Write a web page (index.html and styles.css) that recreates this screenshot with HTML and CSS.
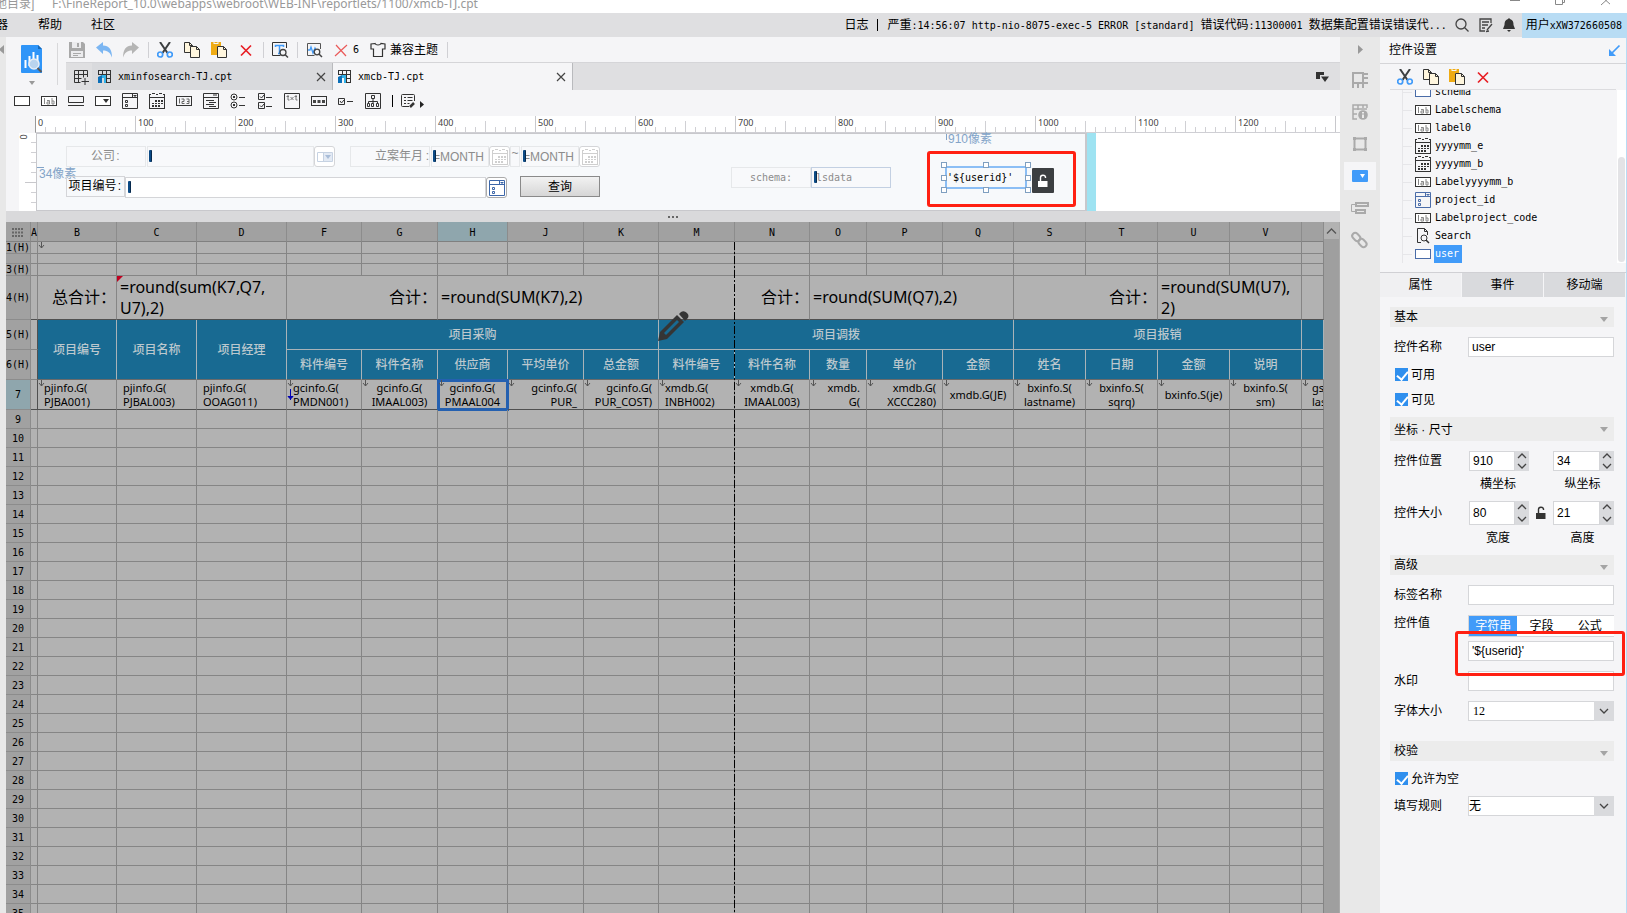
FILE: index.html
```html
<!DOCTYPE html>
<html lang="zh-CN">
<head>
<meta charset="utf-8">
<title>FineReport</title>
<link rel="stylesheet" href="styles.css">
</head>
<body>
<svg class="defs" aria-hidden="true">
  <symbol id="cut" viewBox="0 0 16 16"><path d="M3 0l7.500 11M13 0L5.500 11" stroke="#3c3f41" stroke-width="2" fill="none"/><circle cx="3.200" cy="12.500" r="2.500" fill="none" stroke="#419bf9" stroke-width="1.700"/><circle cx="12.800" cy="12.500" r="2.500" fill="none" stroke="#419bf9" stroke-width="1.700"/></symbol>
  <symbol id="copy" viewBox="0 0 16 16"><path d="M.5.5h5l3 3v7h-8z" fill="#fff6de" stroke="#333"/><path d="M5.500.5v3h3" fill="none" stroke="#333"/><path d="M6.500 4.500h6l3 3v8h-9z" fill="#fff6de" stroke="#333"/><path d="M12.500 4.500v3h3" fill="none" stroke="#333"/></symbol>
  <symbol id="paste" viewBox="0 0 16 16"><path d="M0 0h2.500v2h5V0H10v4H6v9H0z" fill="#efab13"/><path d="M3.500 0h3v1h-3z" fill="#efab13"/><path d="M6.500 4.500h6l3 3v8h-9z" fill="#fff6de" stroke="#333"/><path d="M12.500 4.500v3h3" fill="none" stroke="#333"/></symbol>
  <symbol id="del" viewBox="0 0 16 16"><path d="M3 3.500l10 10M13 3.500l-10 10" stroke="#e81e25" stroke-width="1.700"/></symbol>
  <symbol id="table" viewBox="0 0 16 16"><path d="M1 1.500h13M1.500 1v5M1.500 5.500h12M5.500 1v5M9.500 1v12M13.500 1v12.500M9 9.500h4.500M9 13.500h5" fill="none" stroke="#333"/><path d="M1 8l4-2v8H1z" fill="#0b6fb8"/><path d="M5 6h4v8H7V9H5z" fill="#31b2e8"/></symbol>
  <symbol id="w-text" viewBox="0 0 16 16"><rect x=".5" y="3.500" width="15" height="9" fill="#fff" stroke="currentColor"/></symbol>
  <symbol id="w-label" viewBox="0 0 16 16"><rect x=".5" y="3.500" width="15" height="9" fill="#fff" stroke="#333"/><path d="M3.500 5v6M6 7.500h2.500V11H6V9h2.500M11 5v6h2V8h-2" fill="none" stroke="#888"/></symbol>
  <symbol id="w-cal" viewBox="0 0 16 16"><path d="M0 1h1v15H0zM15 1h1v15h-1zM0 15h16v1H0zM0 1h2v1H0zM3 0h3v1H3zM7 1h2v1H7zM10 0h3v1h-3zM14 1h2v1h-2zM1 4h14v1H1zM6 7h2v2H6zM9 7h2v2H9zM12 7h2v2h-2zM3 10h2v1H3zM6 10h2v1H6zM9 10h2v1H9zM12 10h2v1h-2zM3 12h2v2H3zM6 12h2v2H6zM9 12h2v2H9z" fill="currentColor" shape-rendering="crispEdges"/></symbol>
  <symbol id="w-list" viewBox="0 0 16 16"><path d="M.5.5h15v15H.5zM.5 4.500h15M10.500.5v4M3.500 7.500h2v2h-2zM3.500 11.500h2v2h-2z" fill="none" stroke="currentColor"/><path d="M11 2h4l-2 2z" fill="currentColor"/></symbol>
  <symbol id="mark" viewBox="0 0 7 8"><path d="M3.500 0v6M1 3l2.500 3L6 3" fill="none" stroke="#555"/></symbol>
  <symbol id="unlock" viewBox="0 0 12 14"><path d="M1 7h9.500v6H1z" fill="currentColor"/><path d="M3.500 7V3.500c0-3 4.500-3 5-.5V4" fill="none" stroke="currentColor" stroke-width="1.400"/></symbol>
  <symbol id="chev" viewBox="0 0 10 6"><path d="M1 1l4 4 4-4" fill="none" stroke="#444" stroke-width="1.300"/></symbol>
</svg>

<header class="titlebar"><span>地目录]</span><span class="path">F:\FineReport_10.0\webapps\webroot\WEB-INF\reportlets/1100/xmcb-TJ.cpt</span>
  <svg class="winctl" width="100" height="6" viewBox="0 0 100 6" fill="none" stroke="#888"><path d="M0 .5h10M45.500 0v4.500h7V0M52.500 2.500h2V0M91 5l10-9M101 5L91-4"/></svg>
</header>
<nav class="menubar">
  <a href="#" class="m-cut">器</a><a href="#">帮助</a><a href="#">社区</a>
  <div class="status"><span>日志</span><i></i><span>严重<span class="mono">:14:56:07 http-nio-8075-exec-5 ERROR [standard] </span>错误代码<span class="mono">:11300001 </span>数据集配置错误错误代<span class="mono">...</span></span>
  <button aria-label="搜索"><svg width="14" height="14" fill="none" stroke="#444" stroke-width="1.300"><circle cx="6" cy="6" r="5"/><path d="M9.500 9.500l4 4"/></svg></button>
  <button aria-label="编辑"><svg width="14" height="14" fill="none" stroke="#444" stroke-width="1.300"><path d="M12 5V1H1v12h5M3 4h7M3 7h6M3 10h3M8 12l5-6M7 13.500l3-.5"/></svg></button>
  <button aria-label="通知"><svg width="12" height="14" fill="#333"><path d="M6 0l1 1c3 1 3.500 3 3.500 6l1.500 4H0l1.500-4C1.500 4 2 2 5 1zM4 12h4l-2 2z"/></svg></button></div>
  <span class="user">用户<span class="mono">xXW372660508</span></span>
</nav>

<div class="app">
  <aside class="edge"><svg width="5" height="9"><path d="M5 0v9L0 4.500z" fill="#999"/></svg></aside>
  <main>
    <section class="top">
      <button class="appicon" aria-label="预览"><svg width="22" height="29" viewBox="0 0 22 29"><path d="M1 0h16l4 4v24H1q-1 0-1-1V1q0-1 1-1z" fill="#2f95f8"/><path d="M17 0v4h4z" fill="#1769b8"/><path d="M4.500 15v8M8.500 11v10M12.500 7v8M16.500 10v6" stroke="#fff" stroke-width="2"/><circle cx="13" cy="19" r="5" fill="#b9d4ee" stroke="#e8eef5" stroke-width="1.500"/><path d="M16.500 23l4 4" stroke="#5a5a5a" stroke-width="2"/></svg><svg width="6" height="4"><path d="M0 0h6L3 4z" fill="#999"/></svg></button>
      <div class="topright">
        <div class="toolbar">
          <button aria-label="保存"><svg width="16" height="16"><path d="M0 0h14l2 2v14H0z" fill="#a9a9a9"/><path d="M3 0h9v6H3zM2 9h12v6H2z" fill="#ececee"/><path d="M8 1h2v4H8zM4 11h8v1H4zM4 13h5v1H4z" fill="#a9a9a9"/></svg></button>
          <button aria-label="撤销"><svg width="16" height="16"><path d="M0 5.500L7 0v3.500c6 0 9 4 9 12-2-5-4-7-9-7V12z" fill="#7cb6f2"/></svg></button>
          <button aria-label="重做"><svg width="16" height="16"><path d="M16 5.500L9 0v3.500c-6 0-9 4-9 12 2-5 4-7 9-7V12z" fill="#b5b5b5"/></svg></button>
          <i></i>
          <button aria-label="剪切"><svg width="16" height="16"><use href="#cut"/></svg></button>
          <button aria-label="复制"><svg width="16" height="16"><use href="#copy"/></svg></button>
          <button aria-label="粘贴"><svg width="16" height="16"><use href="#paste"/></svg></button>
          <button aria-label="删除"><svg width="16" height="16"><use href="#del"/></svg></button>
          <i></i>
          <button aria-label="查找"><svg width="16" height="16" fill="none"><path d="M14.500 6V.5H.5v13h8" stroke="#333"/><path d="M3.500 5V3.500h8V5M7.500 3.500v8M6 11.500h3" stroke="#419bf9" stroke-width="1.500"/><circle cx="11" cy="10.500" r="3" stroke="#444" stroke-width="1.300"/><path d="M13 12.500l3 3" stroke="#444" stroke-width="1.500"/></svg></button>
          <i></i>
          <button aria-label="监控"><svg width="16" height="16" fill="none"><path d="M14.500 7V1.500H1.500v12h7" stroke="#555"/><path d="M2 8h2l1-3 2 6 2-5 1 2" stroke="#419bf9" stroke-width="1.300"/><circle cx="11" cy="10" r="2.800" stroke="#444" stroke-width="1.300"/><path d="M13 12l3 3" stroke="#444" stroke-width="1.500"/></svg></button>
          <button><svg width="16" height="16" viewBox="0 0 16 16"><path d="M3 3l10 11M14 3L2 14" stroke="#ea5a5a" stroke-width="1.200"/></svg><span class="mono">6</span></button>
          <button><svg width="16" height="16" fill="none"><path d="M5 1.500L1 2v5h2.500v7.500h9V7H15V2l-4-.5c-1 2-5 2-6 0z" stroke="#333" stroke-width="1.200"/></svg><span>兼容主题</span></button>
          <i></i>
        </div>
        <div class="tabs">
          <button class="newtab" aria-label="新建"><svg width="16" height="16" fill="none" stroke="#333"><path d="M14.500 8V1.500H1.500v12h6M1.500 5.500h13M1.500 9.500h7M5.500 1.500v12M10.500 1.500v7M12 9v7M8.500 12.500H16"/></svg></button>
          <div class="tab"><svg width="16" height="16"><use href="#table"/></svg><span class="mono">xminfosearch-TJ.cpt</span><button aria-label="关闭"><svg width="8" height="8" stroke="#444" stroke-width="1.200"><path d="M0 0l8 8M8 0L0 8"/></svg></button></div>
          <div class="tab on"><svg width="16" height="16"><use href="#table"/></svg><span class="mono">xmcb-TJ.cpt</span><button aria-label="关闭"><svg width="8" height="8" stroke="#444" stroke-width="1.200"><path d="M0 0l8 8M8 0L0 8"/></svg></button></div>
          <button class="tablist" aria-label="标签列表"><svg width="13" height="10" fill="#333"><path d="M0 0h8v3H4v4H0zM5 4.500h8L9 10z"/></svg></button>
        </div>
      </div>
    </section>

    <div class="widgets">
      <button aria-label="文本"><svg width="16" height="16"><use href="#w-text"/></svg></button>
      <button aria-label="标签"><svg width="16" height="16"><use href="#w-label"/></svg></button>
      <button aria-label="按钮"><svg width="16" height="16"><path d="M.5 3.500h15v6H.5zM0 12.500h16" fill="none" stroke="#333"/></svg></button>
      <button aria-label="下拉"><svg width="16" height="16"><rect x=".5" y="3.500" width="15" height="9" fill="#fff" stroke="#333"/><path d="M8 6h6l-3 4z" fill="#333"/></svg></button>
      <button aria-label="列表"><svg width="16" height="16"><use href="#w-list"/></svg></button>
      <button aria-label="日期"><svg width="16" height="16"><use href="#w-cal"/></svg></button>
      <button aria-label="数字"><svg width="16" height="16" fill="none"><rect x=".5" y="3.500" width="15" height="9" stroke="#333"/><path d="M3.500 5.500v5M5.500 6h2.500v2.500H6v2h2.500M10.500 6H13v4.500h-2.500M11 8.500h2" stroke="#666"/></svg></button>
      <button aria-label="文本域"><svg width="16" height="16" fill="none" stroke="#333"><path d="M.5.5h15v15H.5zM.5 4.500h15M10 2h4M3 7.500h8M6 9.500h7M3 11.500h8M6 13.500h7"/></svg></button>
      <button aria-label="单选组"><svg width="16" height="16" fill="none" stroke="#333"><circle cx="4" cy="4" r="3"/><circle cx="4" cy="12" r="3"/><path d="M3 4h2M3 12h2" stroke-width="2"/><path d="M9 4.500h6M9 12.500h6"/></svg></button>
      <button aria-label="复选组"><svg width="16" height="16" fill="none" stroke="#333"><path d="M1.500.5h6v6h-6zM1.500 9.500h6v6h-6zM3 3.500l1.500 1.500L7 2M3 12.500l1.500 1.500L7 11M9 4.500h6M9 13.500h6"/></svg></button>
      <button aria-label="文本块"><svg width="16" height="16" fill="none" stroke="#333"><path d="M.5.5h15v15H.5z"/><path d="M4 2v5h1.500M2.500 3.500H5M6.500 4l3 3M9.500 4l-3 3M12 2v5h1.500M10.500 3.500H13" stroke="#777"/></svg></button>
      <button aria-label="密码"><svg width="16" height="16"><rect x=".5" y="3.500" width="15" height="9" fill="none" stroke="#333"/><path d="M2 7h3v3H2zM6.500 7h3v3h-3zM11 7h3v3h-3z" fill="#444"/></svg></button>
      <button aria-label="复选"><svg width="16" height="16" fill="none" stroke="#333"><path d="M.5 5.500h6v6h-6zM2 8l1.500 2L6 7M9 8.500h6"/></svg></button>
      <button aria-label="树"><svg width="16" height="16" fill="none" stroke="#333"><path d="M.5.5h15v15H.5zM6.500 2.500h3v3h-3zM2.500 10.500h2v3h-2zM6.500 10.500h2v3h-2zM11.500 10.500h2v3h-2zM8 5.500v5M3.500 10V8.500h9V10"/></svg></button>
      <i></i>
      <button aria-label="更多"><svg width="24" height="16" fill="none" stroke="#333"><path d="M13.500 8V2.500Q13.500 1.500 12.500 1.500h-11Q.5 1.500.5 2.500v10q0 1 1 1H8M3 4.500h2M3 7.500h2M3 10.500h2M6.500 4.500h5M6.500 7.500h5M6.500 10.500h2"/><path d="M9 14l4-4" stroke-width="2.500"/><path d="M19 8v7l4-3.500z" fill="#222" stroke="none"/></svg></button>
    </div>

    <div class="ruler"><span>0</span><span>100</span><span>200</span><span>300</span><span>400</span><span>500</span><span>600</span><span>700</span><span>800</span><span>900</span><span>1000</span><span>1100</span><span>1200</span><span></span></div>
    <section class="design">
      <div class="vruler"><span>0</span></div>
      <div class="canvas">
        <label class="w lab dim p-co" for="co">公司<b>:</b></label>
        <input class="w dim p-coin" id="co"><em class="caret p-c1"></em>
        <button class="w wb dim p-cob" aria-label="公司下拉"><svg width="16" height="16"><path d="M.5 3.500h15v9H.5zM6.500 3.500v9" fill="none" stroke="#c6d2e2"/><path d="M7 4h8v8H7z" fill="#e3eaf4"/><path d="M8 6h6l-3 4z" fill="#a9bdd8"/></svg></button>
        <label class="w lab dim right p-ym" for="m1">立案年月<b>:</b></label>
        <input class="w dim p-m1" id="m1" value="=MONTH"><em class="caret p-c2"></em>
        <button class="w wb dim p-m1b" aria-label="开始月"><svg width="16" height="16"><use href="#w-cal"/></svg></button>
        <span class="w lab dim p-tilde">~</span>
        <input class="w dim p-m2" aria-label="结束月" value="=MONTH"><em class="caret p-c3"></em>
        <button class="w wb dim p-m2b" aria-label="结束月选择"><svg width="16" height="16"><use href="#w-cal"/></svg></button>
        <span class="hint p-h1">34像素</span>
        <label class="w lab p-pj" for="pj">项目编号<b>:</b></label>
        <input class="w p-pjin" id="pj"><em class="caret p-c4"></em>
        <button class="w wb p-pjb" aria-label="项目选择"><svg width="16" height="16"><use href="#w-list"/></svg></button>
        <button class="query">查询</button>
        <label class="w lab dim mono p-sc" for="sc">schema:</label>
        <input class="w dim mono schema p-scin" id="sc" value="lsdata"><em class="caret p-c5"></em>
        <span class="hint p-h2">910像素</span>
        <div class="selected mono">'${userid}'<u></u><u></u><u></u><u></u><u></u><u></u><u></u><u></u></div>
        <button class="lock" aria-label="解锁"><svg width="12" height="14"><use href="#unlock"/></svg></button>
        <div class="redbox p-red"></div>
      </div>
      <div class="grow"></div>
    </section>
    <div class="splitter"><i></i><i></i><i></i></div>

    <section class="sheet">
      <div class="gridwrap">
        <table>
          <colgroup><col class="c25"><col class="c7"><col class="c79"><col class="c80"><col class="c90"><col class="c75"><col class="c76"><col class="c70"><col class="c76"><col class="c75"><col class="c76"><col class="c75"><col class="c57"><col class="c76"><col class="c71"><col class="c72"><col class="c72"><col class="c72"><col class="c72"><col></colgroup>
          <thead><tr class="h20"><th><svg width="12" height="9" fill="#666"><path d="M0 0h2v2H0zM3 0h2v2H3zM6 0h2v2H6zM9 0h2v2H9zM0 3.500h2v2H0zM3 3.500h2v2H3zM6 3.500h2v2H6zM9 3.500h2v2H9zM0 7h2v2H0zM3 7h2v2H3zM6 7h2v2H6zM9 7h2v2H9z"/></svg></th><th class="a">A</th><th>B</th><th>C</th><th>D</th><th>F</th><th>G</th><th class="cur">H</th><th>J</th><th>K</th><th>M</th><th>N</th><th>O</th><th>P</th><th>Q</th><th>S</th><th>T</th><th>U</th><th>V</th><th></th></tr></thead>
          <tbody id="rows">
            <tr class="h12"><th>1(H)</th><td></td><td><svg class="mk"><use href="#mark"/></svg></td><td></td><td></td><td></td><td></td><td></td><td></td><td></td><td></td><td></td><td></td><td></td><td></td><td></td><td></td><td></td><td></td><td></td></tr>
            <tr class="h10"><th></th><td></td><td></td><td></td><td></td><td></td><td></td><td></td><td></td><td></td><td></td><td></td><td></td><td></td><td></td><td></td><td></td><td></td><td></td><td></td></tr>
            <tr class="h12"><th>3(H)</th><td></td><td></td><td></td><td></td><td></td><td></td><td></td><td></td><td></td><td></td><td></td><td></td><td></td><td></td><td></td><td></td><td></td><td></td><td></td></tr>
            <tr class="h44 sum"><th>4(H)</th><td></td><td class="r">总合计：</td><td colspan="2"><span class="flag"></span>=round(sum(K7,Q7,<br>U7),2)</td><td class="r" colspan="2">合计：</td><td colspan="3">=round(SUM(K7),2)</td><td class="r" colspan="2">合计：</td><td colspan="3">=round(SUM(Q7),2)</td><td class="r" colspan="2">合计：</td><td colspan="2">=round(SUM(U7),<br>2)</td><td></td></tr>
            <tr class="h30 head"><th>5(H)</th><td class="pre"></td><td rowspan="2">项目编号</td><td rowspan="2">项目名称</td><td rowspan="2">项目经理</td><td colspan="5">项目采购</td><td colspan="5">项目调拨</td><td colspan="4">项目报销</td><td></td></tr>
            <tr class="h30 head"><th>6(H)</th><td class="pre"></td><td>料件编号</td><td>料件名称</td><td>供应商</td><td>平均单价</td><td>总金额</td><td>料件编号</td><td>料件名称</td><td>数量</td><td>单价</td><td>金额</td><td>姓名</td><td>日期</td><td>金额</td><td>说明</td><td></td></tr>
            <tr class="h30 data"><th class="cur">7</th><td class="pre"></td><td class="l"><svg class="mk"><use href="#mark"/></svg>pjinfo.G(<br>PJBA001)</td><td class="l">pjinfo.G(<br>PJBAL003)</td><td class="l">pjinfo.G(<br>OOAG011)</td><td class="l"><svg class="mk"><use href="#mark"/></svg><svg class="down" viewBox="0 0 5 12"><path d="M2.500 0v11M0 7.500h5L2.500 10z" stroke="#0000b4" fill="#0000b4"/></svg>gcinfo.G(<br>PMDN001)</td><td><svg class="mk"><use href="#mark"/></svg>gcinfo.G(<br>IMAAL003)</td><td class="sel"><svg class="mk"><use href="#mark"/></svg>gcinfo.G(<br>PMAAL004</td><td class="r"><svg class="mk"><use href="#mark"/></svg>gcinfo.G(<br>PUR_</td><td class="r"><svg class="mk"><use href="#mark"/></svg>gcinfo.G(<br>PUR_COST)</td><td class="l"><svg class="mk"><use href="#mark"/></svg>xmdb.G(<br>INBH002)</td><td><svg class="mk"><use href="#mark"/></svg>xmdb.G(<br>IMAAL003)</td><td class="r"><svg class="mk"><use href="#mark"/></svg>xmdb.<br>G(</td><td class="r"><svg class="mk"><use href="#mark"/></svg>xmdb.G(<br>XCCC280)</td><td><svg class="mk"><use href="#mark"/></svg>xmdb.G(JE)</td><td><svg class="mk"><use href="#mark"/></svg>bxinfo.S(<br>lastname)</td><td><svg class="mk"><use href="#mark"/></svg>bxinfo.S(<br>sqrq)</td><td><svg class="mk"><use href="#mark"/></svg>bxinfo.S(je)</td><td><svg class="mk"><use href="#mark"/></svg>bxinfo.S(<br>sm)</td><td class="last"><svg class="mk"><use href="#mark"/></svg>gs<br>las</td></tr>
          </tbody>
        </table>
        <div class="pagebreak"></div>
        <svg class="pencil" viewBox="0 0 30 30"><path d="M0 30l2-9L19 4l7 7L9 28z" fill="#353535"/><path d="M6 22L19 9l2 2L8 24z" fill="#186a92"/><path d="M21 3l2-2q3-2 6 1t0 6l-2 2z" fill="#353535"/></svg>
      </div>
      <div class="vscroll"><button aria-label="向上"><svg width="9" height="6" fill="none" stroke="#555" stroke-width="1.300"><path d="M0 5.500L4.500 1 9 5.500"/></svg></button></div>
    </section>
  </main>

  <aside class="side">
    <button aria-label="收起"><svg width="5" height="9"><path d="M0 0v9l5-4.500z" fill="#999"/></svg></button>
    <button aria-label="单元格元素"><svg width="16" height="16" fill="none" stroke="#aaa" stroke-width="2"><path d="M1 16V1h10v10H1M6 11v5M11 11v5M11 2h5M11 6h5M11 11h5"/></svg></button>
    <button aria-label="单元格属性"><svg width="16" height="16" fill="none" stroke="#aaa" stroke-width="1.500"><path d="M15 4V1H1v14h4M1 5h14M1 10h4M6 1v5M11 1v3"/><circle cx="11" cy="11" r="4.800" fill="#aaa" stroke="none"/><path d="M11 8v1.500M11 10.500V14" stroke="#fff"/></svg></button>
    <button aria-label="悬浮元素"><svg width="16" height="16" fill="none" stroke="#aaa" stroke-width="2"><path d="M2.500 2.500h11v11h-11z"/><path d="M1 1h3v3H1zM12 1h3v3h-3zM1 12h3v3H1zM12 12h3v3h-3z" fill="#aaa" stroke="none"/></svg></button>
    <button class="on" aria-label="控件设置"><svg width="16" height="12"><rect width="16" height="12" rx="1" fill="#419bf9"/><path d="M8 4h5l-2.500 4z" fill="#fff"/></svg></button>
    <button aria-label="条件属性"><svg width="18" height="12" fill="none" stroke="#aaa" stroke-width="2"><rect x="5" y="1" width="12" height="3"/><rect x="5" y="8" width="9" height="3"/><path d="M4 2.500H.5v7H4" stroke-width="1"/></svg></button>
    <button aria-label="超级链接"><svg width="16" height="16" fill="none" stroke="#aaa" stroke-width="2"><rect x="0" y="2.500" width="9" height="6" rx="3" transform="rotate(45 5 5)"/><rect x="6" y="8" width="9" height="6" rx="3" transform="rotate(45 10.500 11)"/></svg></button>
  </aside>

  <aside class="props">
    <div class="phead"><span>控件设置</span><svg width="11" height="11"><path d="M10.500.5L3 8" stroke="#419bf9" stroke-width="1.700"/><path d="M0 4v7h7z" fill="#419bf9"/></svg></div>
    <div class="ptools">
      <button aria-label="剪切"><svg width="16" height="16"><use href="#cut"/></svg></button>
      <button aria-label="复制"><svg width="16" height="16"><use href="#copy"/></svg></button>
      <button aria-label="粘贴"><svg width="16" height="16"><use href="#paste"/></svg></button>
      <button aria-label="删除"><svg width="16" height="16"><use href="#del"/></svg></button>
    </div>
    <div class="treebox">
      <ul class="tree mono">
        <li><svg width="16" height="16" class="blue"><use href="#w-text"/></svg><span>schema</span></li>
        <li><svg width="16" height="16"><use href="#w-label"/></svg><span>Labelschema</span></li>
        <li><svg width="16" height="16"><use href="#w-label"/></svg><span>label0</span></li>
        <li><svg width="16" height="16"><use href="#w-cal"/></svg><span>yyyymm_e</span></li>
        <li><svg width="16" height="16"><use href="#w-cal"/></svg><span>yyyymm_b</span></li>
        <li><svg width="16" height="16"><use href="#w-label"/></svg><span>Labelyyyymm_b</span></li>
        <li><svg width="16" height="16" class="blue"><use href="#w-list"/></svg><span>project_id</span></li>
        <li><svg width="16" height="16"><use href="#w-label"/></svg><span>Labelproject_code</span></li>
        <li><svg width="16" height="16" fill="none" stroke="#333"><path d="M6 14.500H2.500V.5h7l3 3V7M9.500.5v3h3"/><circle cx="9" cy="10" r="3"/><path d="M11 12l3 3" stroke-width="1.500"/></svg><span>Search</span></li>
        <li class="picked"><svg width="16" height="16" class="blue"><use href="#w-text"/></svg><span>user</span></li>
      </ul>
      <div class="tscroll"><i></i></div>
    </div>
    <div class="ptabs"><button class="on">属性</button><button>事件</button><button>移动端</button></div>
    <form class="form">
      <h3>基本</h3>
      <div class="row"><label for="nm">控件名称</label><input id="nm" value="user"></div>
      <div class="checks">
        <label><input type="checkbox" checked>可用</label>
        <label><input type="checkbox" checked>可见</label>
      </div>
      <h3 class="tall">坐标 · 尺寸</h3>
      <div class="pos">
        <span>控件位置</span>
        <div class="spin"><input aria-label="横坐标" value="910"><span><svg width="10" height="6" class="up"><use href="#chev"/></svg><svg width="10" height="6"><use href="#chev"/></svg></span></div>
        <span></span>
        <div class="spin"><input aria-label="纵坐标" value="34"><span><svg width="10" height="6" class="up"><use href="#chev"/></svg><svg width="10" height="6"><use href="#chev"/></svg></span></div>
        <span></span><small>横坐标</small><span></span><small>纵坐标</small>
      </div>
      <div class="pos big">
        <span>控件大小</span>
        <div class="spin"><input aria-label="宽度" value="80"><span><svg width="10" height="6" class="up"><use href="#chev"/></svg><svg width="10" height="6"><use href="#chev"/></svg></span></div>
        <button type="button" aria-label="锁定比例"><svg width="12" height="14"><use href="#unlock"/></svg></button>
        <div class="spin"><input aria-label="高度" value="21"><span><svg width="10" height="6" class="up"><use href="#chev"/></svg><svg width="10" height="6"><use href="#chev"/></svg></span></div>
        <span></span><small>宽度</small><span></span><small>高度</small>
      </div>
      <h3>高级</h3>
      <div class="row"><label for="tag">标签名称</label><input id="tag"></div>
      <div class="row valrow"><label for="val">控件值</label>
        <div class="val"><div class="seg"><button type="button" class="on">字符串</button><button type="button">字段</button><button type="button">公式</button></div>
        <input id="val" value="'${userid}'"><div class="redbox p-red2"></div></div></div>
      <div class="row"><label for="wm">水印</label><input id="wm"></div>
      <div class="row"><label for="fs">字体大小</label><div class="dd"><select id="fs" class="serif"><option>12</option></select><span><svg width="10" height="6"><use href="#chev"/></svg></span></div></div>
      <h3 class="later">校验</h3>
      <div class="checks"><label><input type="checkbox" checked>允许为空</label></div>
      <div class="row"><label for="rule">填写规则</label><div class="dd"><select id="rule"><option>无</option></select><span><svg width="10" height="6"><use href="#chev"/></svg></span></div></div>
    </form>
  </aside>
</div>
<script src="rows.js"></script>
</body>
</html>
```
FILE: styles.css
```css
* { box-sizing: border-box; }
body {
  margin: 0; height: 100vh; overflow: hidden; display: flex; flex-direction: column;
  font: 12px/14px "Liberation Sans", "Noto Sans CJK SC", sans-serif; color: #000; background: #f5f5f7;
}
button { border: 0; padding: 0; margin: 0; background: none; font: inherit; color: inherit; display: flex; align-items: center; justify-content: center; flex: none; }
input, select { font: inherit; color: inherit; margin: 0; border-radius: 0; min-width: 0; }
svg { display: block; flex: none; overflow: visible; color: #333; }
.defs { position: absolute; width: 0; height: 0; }
.mono { font-family: "DejaVu Sans Mono", monospace; font-size: 10px; }
b { font-weight: normal; width: 6px; display: inline-block; }

.titlebar { height: 13px; flex: none; background: #fff; color: #999; display: flex; line-height: 8px; white-space: nowrap; }
.titlebar > span:first-child { margin-left: -5px; width: 57px; }
.path { font-family: "Noto Sans", sans-serif; }
.winctl { margin-left: auto; margin-right: 17px; overflow: hidden; }
.menubar { height: 24px; flex: none; background: #dfdfe1; display: flex; align-items: center; white-space: nowrap; }
.menubar a { color: #000; text-decoration: none; margin-right: 29px; }
.menubar a.m-cut { margin-left: -4px; margin-right: 30px; }
.status { margin-left: auto; display: flex; align-items: center; }
.status > i { width: 1px; height: 12px; background: #000; margin: 0 9px; }
.status .mono { white-space: pre; }
.status button { margin-left: 10px; }
.status span + button { margin-left: 8px; }
.user { margin-left: 7px; background: #b8dcf4; line-height: 24px; padding: 0 5px 0 4px; }

.app { flex: 1; min-height: 0; display: flex; }
.edge { width: 6px; background: #e8e8e8; padding-top: 8px; }
.edge svg { margin-left: -1px; }
main { flex: 1; min-width: 0; display: flex; flex-direction: column; }

.top { display: flex; height: 53px; flex: none; }
.appicon { width: 52px; height: 42px; margin: 6px 8px 0 0; border-right: 1px solid #d8d8da; flex-direction: column; justify-content: flex-end; gap: 7px; }
.topright { flex: 1; display: flex; flex-direction: column; }
.toolbar { height: 25px; display: flex; align-items: center; gap: 11px; padding-left: 3px; }
.toolbar i { width: 1px; height: 16px; background: #d0d0d4; margin: 0 -3px 0 -2px; }
.toolbar button { gap: 4px; }
.tabs { height: 28px; background: #dfdfe1; border-top: 1px solid #d5d5d8; display: flex; }
.newtab { width: 26px; padding-left: 4px; }
.tab { width: 241px; background: #d9dadd; border-right: 1px solid #b9babd; display: flex; align-items: center; gap: 5px; padding: 0 7px 0 5px; }
.tab.on { width: 240px; background: #f5f5f7; padding-left: 4px; }
.tab button { margin-left: auto; }
.tablist { margin-left: auto; padding-right: 11px; }

.widgets { height: 26px; flex: none; display: flex; align-items: center; gap: 11px; padding: 0 0 4px 8px; }
.widgets i { width: 1px; height: 12px; background: #000; margin: 0 -3px 0 0; }

.ruler { height: 17px; flex: none; margin-left: 29px; display: flex; overflow: hidden; border-bottom: 1px solid #cfcfd4; border-left: 1px solid #999;
  background: repeating-linear-gradient(90deg, transparent 0 99px, #c8c8cc 99px 100px) 0 0/100% 16px no-repeat,
    repeating-linear-gradient(90deg, transparent 0 49px, #d0d0d4 49px 50px) 0 5px/100% 11px no-repeat,
    repeating-linear-gradient(90deg, transparent 0 9px, #d0d0d4 9px 10px) 0 11px/100% 5px no-repeat, #fff; }
.ruler span { width: 100px; flex: none; padding-left: 2px; font: 9px/13px "Noto Sans", sans-serif; color: #444; }
.design { height: 78px; flex: none; display: flex; }
.vruler { width: 17px; margin-left: 13px; flex: none;
  background: repeating-linear-gradient(180deg, transparent 0 49px, #c8c8cc 49px 50px) 6px 0/11px 100% no-repeat,
    repeating-linear-gradient(180deg, transparent 0 9px, #d0d0d4 9px 10px) 12px 0/5px 100% no-repeat, #fff; }
.vruler span { display: block; width: 10px; height: 8px; font: 9px/8px "Noto Sans", sans-serif; color: #444; text-align: center; transform: rotate(-90deg); }
.canvas { position: relative; width: 1051px; flex: none; background: #f7f9fb; border: 1px solid #c8c8cc; border-width: 1px 2px 1px 1px; }
.grow { flex: 1; background: #fff; border-left: 9px solid #9ee3f2; }

.w { position: absolute; height: 21px; border: 1px solid #d4d5d8; background: transparent; line-height: 19px; padding: 0; }
input.w { background: #fff; }
.dim, input.w.dim { border-color: #e6e8ea; background: #f8f9fb; color: #8c8c8c; }
.lab { text-align: center; white-space: nowrap; }
.lab.right { text-align: right; }
.wb { border-radius: 3px; border-color: #aaa; background: #fff; width: 21px; }
.wb svg { color: #3c66a8; }
.wb.dim { border-color: #d4d5d8; }
.wb.dim svg { color: #cfcfcf; }
input.w.schema { border-color: #c3d0e2; padding-left: 4px; }
.caret { position: absolute; width: 3px; height: 12px; background: #0b4a85; border-right: 1px solid #06294d; border-radius: 1px; }
.hint { position: absolute; color: #83a4c8; line-height: 12px; border: 0 solid #83a4c8; }
.p-co { left: 29px; top: 12px; width: 80px; } .p-coin { left: 110px; top: 12px; width: 167px; } .p-cob { left: 277px; top: 12px; }
.p-c1 { left: 112px; top: 16px; }
.p-ym { left: 313px; top: 12px; width: 80px; } .p-m1, .p-m2 { top: 12px; width: 58px; padding-left: 1px; }
.p-m1 { left: 394px; } .p-c2 { left: 396px; top: 16px; } .p-m1b { left: 452px; top: 12px; }
.p-tilde { left: 473px; top: 12px; width: 10px; line-height: 12px; }
.p-m2 { left: 484px; } .p-c3 { left: 486px; top: 16px; } .p-m2b { left: 542px; top: 12px; }
.p-h1 { left: 2px; top: 34px; } .p-h1::before { content: ""; position: absolute; left: -2px; top: -1px; width: 7px; border-top: 1px solid #83a4c8; }
.p-pj { left: 29px; top: 42px; width: 59px; } .p-pjin { left: 88px; top: 43px; width: 361px; } .p-c4 { left: 91px; top: 47px; } .p-pjb { left: 449px; top: 43px; }
.query { position: absolute; left: 483px; top: 42px; width: 80px; height: 21px; border: 1px solid #8a8a8a; background: linear-gradient(#f2f2f2, #d6d6d6); }
.p-sc { left: 694px; top: 33px; width: 80px; } .p-scin { left: 774px; top: 33px; width: 80px; } .p-c5 { left: 777px; top: 37px; }
.p-h2 { left: 911px; top: -1px; } .p-h2::before { content: ""; position: absolute; left: -2px; top: 1px; height: 6px; border-left: 1px solid #83a4c8; }
.selected { position: absolute; left: 908px; top: 32px; width: 82px; height: 23px; border: 2px solid #8bbef5; line-height: 20px; padding-left: 0; background: #f7f9fb; }
.selected u { position: absolute; width: 6px; height: 6px; border: 1px solid #7f9fc0; background: #fff; }
.selected u:nth-child(1) { left: -6px; top: -6px; } .selected u:nth-child(2) { left: 36px; top: -6px; } .selected u:nth-child(3) { right: -6px; top: -6px; }
.selected u:nth-child(4) { left: -6px; top: 7px; } .selected u:nth-child(5) { right: -6px; top: 7px; }
.selected u:nth-child(6) { left: -6px; bottom: -6px; } .selected u:nth-child(7) { left: 36px; bottom: -6px; } .selected u:nth-child(8) { right: -6px; bottom: -6px; }
.lock { position: absolute; left: 995px; top: 34px; width: 22px; height: 25px; background: #3c3f41; border-radius: 1px; }
.lock svg { color: #fff; }
.redbox { position: absolute; border: 3px solid #ff2012; border-radius: 3px; pointer-events: none; }
.p-red { left: 890px; top: 17px; width: 149px; height: 56px; }
.splitter { height: 11px; flex: none; background: #d9d9db; display: flex; justify-content: center; align-items: center; gap: 2px; }
.splitter i { width: 2px; height: 2px; background: #666; }

.sheet { flex: 1; min-height: 0; display: flex; background: #b2b2b2; }
.gridwrap { flex: 1; min-width: 0; position: relative; overflow: hidden; }
table { table-layout: fixed; width: 100%; border-collapse: separate; border-spacing: 0; }
th, td { padding: 0; border: 0 solid #858585; border-width: 0 1px 1px 0; overflow: hidden; white-space: nowrap; position: relative; line-height: 10px; }
th { background: #a1a1a1; font: 10px/10px "DejaVu Sans Mono", monospace; border-color: #8c8c8c; }
tbody th { overflow: visible; }
thead th { border-bottom-color: #808080; padding-top: 2px; }
.h19 th { padding-top: 2px; }
th svg { margin: 0 auto; }
th.a { overflow: visible; }
.cur { background: #8fa6ad; }
.c25 { width: 25px; } .c7 { width: 7px; } .c57 { width: 57px; } .c70 { width: 70px; } .c71 { width: 71px; } .c72 { width: 72px; }
.c75 { width: 75px; } .c76 { width: 76px; } .c79 { width: 79px; } .c80 { width: 80px; } .c90 { width: 90px; }
.h10 { height: 10px; } .h12 { height: 12px; } .h19 { height: 19px; } .h20 { height: 20px; } .h30 { height: 30px; } .h44 { height: 44px; }
.h12 th, .h12 td { line-height: 9px; }
.sum td { font: 16px/21px "Noto Sans", "Noto Sans CJK SC", sans-serif; padding-left: 3px; border-bottom-color: #505050; }
.sum td.r { text-align: right; padding: 0; }
.flag { position: absolute; left: 0; top: 0; border: 3px solid #c00020; border-right-color: transparent; border-bottom-color: transparent; }
.head td { background: #186a92; color: #bcc8ce; text-align: center; font-weight: 500; border-color: #a9b3b8; }
.head td[rowspan], .head + .head td { border-bottom-color: #6a6a6a; }
td.pre, .head td.pre { background: #b2b2b2; border-color: #858585 #505050 #858585 #858585; }
.data td { font: 11px/14px "Noto Sans", sans-serif; text-align: center; border-bottom-color: #505050; }
.data td.l { text-align: left; padding-left: 6px; }
.data td.r { text-align: right; padding-right: 6px; }
.data td.last { padding-left: 10px; text-align: left; }
.data td.sel { outline: 3px solid #2460b0; outline-offset: -2px; }
.mk { position: absolute; left: 0; top: 0; width: 7px; height: 8px; }
.down { position: absolute; left: 1px; top: 9px; width: 5px; height: 12px; }
.pagebreak { position: absolute; left: 728px; top: 20px; bottom: 0; width: 1px; background: repeating-linear-gradient(180deg, #000 0 8px, transparent 8px 10px, #000 10px 12px, transparent 12px 14px); }
.pencil { position: absolute; left: 652px; top: 89px; width: 30px; height: 30px; }
.vscroll { width: 16px; flex: none; background: #9f9f9f; border-right: 1px solid #aaa; }
.vscroll button { width: 100%; height: 17px; background: #b2b2b2; }

.side { width: 40px; flex: none; background: #e8e8e8; display: flex; flex-direction: column; align-items: center; gap: 4px; }
.side button { width: 32px; height: 28px; }
.side button:first-child { height: 25px; }
.side .on { background: #f5f5f7; }

.props { width: 247px; flex: none; display: flex; flex-direction: column; border-right: 1px solid #b8dcf4; }
.phead { height: 27px; flex: none; border-bottom: 1px solid #d5d5d8; display: flex; align-items: center; justify-content: space-between; padding: 0 6px 0 9px; }
.ptools { height: 26px; flex: none; display: flex; align-items: center; gap: 10px; margin: 0 10px; padding-left: 7px; border-bottom: 1px solid #dcdcdf; }
.treebox { height: 173px; flex: none; display: flex; margin-bottom: 9px; }
.tree { flex: 1; margin: 0 0 0 22px; padding: 0; list-style: none; overflow: hidden; display: flex; flex-direction: column; justify-content: flex-end; }
.tree li { height: 18px; flex: none; display: flex; align-items: center; gap: 3px; border-left: 1px solid #e6e6e9; }
.tree li::before { content: ""; width: 9px; border-top: 1px solid #e6e6e9; }
.tree li span { line-height: 18px; padding: 0 1px; }
.tree .picked span { background: #419bf9; color: #fff; padding: 0 3px 0 1px; }
.blue { color: #4a6ca8; }
.tscroll { width: 9px; background: #fff; padding: 67px 0 1px 1px; display: flex; }
.tscroll i { width: 7px; background: #e3e3e6; border-radius: 4px; }
.ptabs { display: flex; height: 25px; flex: none; border-top: 1px solid #d0d0d4; gap: 1px; padding-right: 1px; }
.ptabs button { flex: 1; background: #d9dadd; }
.ptabs .on { background: #f0f0f2; }
.form { display: flex; flex-direction: column; gap: 10px; padding: 10px 12px 10px 10px; }
h3 { margin: 0; font: inherit; background: #ececec; height: 20px; line-height: 18px; padding: 0 6px 0 4px; display: flex; justify-content: space-between; align-items: center; }
h3::after { content: ""; border: 4px solid transparent; border-top: 5px solid #a4a4a4; border-bottom: 0; margin-top: 5px; }
h3.tall { height: 24px; padding-top: 1px; }
h3.tall::after { margin-top: 0; }
h3.later { margin-top: 10px; }
.row { display: grid; grid-template-columns: 74px 1fr; align-items: center; padding-left: 4px; }
.row input, .spin input, select { height: 20px; width: 100%; border: 1px solid #d5d6d9; background: #fff; padding: 0 3px; }
.checks { display: flex; flex-direction: column; gap: 10px; padding-left: 5px; }
.checks label { display: flex; align-items: center; gap: 3px; height: 15px; }
.checks input { appearance: none; width: 13px; height: 13px; background: #2f8fee; position: relative; }
.checks input::after { content: ""; position: absolute; left: 4px; top: 1px; width: 5px; height: 9px; border: solid #fff; border-width: 0 2px 2px 0; transform: rotate(40deg); }
.pos { display: grid; grid-template-columns: 75px 60px 24px 1fr; grid-template-rows: 20px 20px; padding-left: 4px; align-items: center; }
.pos.big { grid-template-rows: 24px 20px; }
.pos small { font-size: 12px; line-height: 26px; height: 20px; text-align: center; padding-right: 2px; }
.spin { display: flex; height: 100%; }
.spin input { flex: 1; height: 100%; }
.spin span { width: 14px; flex: none; background: #d9dadd; display: flex; flex-direction: column; align-items: center; justify-content: space-around; }
.up { transform: rotate(180deg); }
.valrow { align-items: start; }
.valrow label { padding-top: 1px; }
.val { position: relative; display: flex; flex-direction: column; gap: 4px; }
.seg { display: flex; height: 22px; background: #fff; border: 1px solid #d5d6d9; border-right: 0; }
.seg button { flex: 1; }
.seg .on { background: #419bf9; color: #fff; }
.p-red2 { left: -13px; right: -11px; top: 16px; height: 45px; }
.dd { position: relative; }
.dd select { appearance: none; padding: 0; display: block; }
.dd select.serif { font-family: "Liberation Serif", serif; padding: 0 4px; }
.dd span { position: absolute; right: 0; top: 0; width: 20px; height: 20px; background: #d9dadd; display: flex; align-items: center; justify-content: center; pointer-events: none; }
```
FILE: rows.js
```js
const body = document.getElementById('rows');
for (let n = 9; n <= 60; n++) {
  const tr = document.createElement('tr');
  tr.className = 'h19';
  tr.innerHTML = '<th>' + n + '</th>' + '<td></td>'.repeat(19);
  body.appendChild(tr);
}
```
